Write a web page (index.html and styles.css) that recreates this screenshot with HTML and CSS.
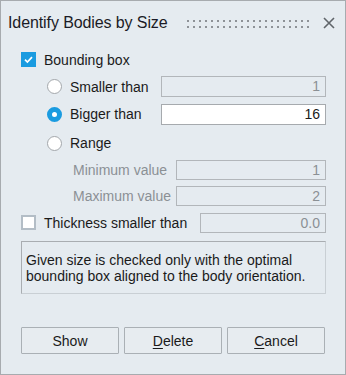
FILE: index.html
```
<!DOCTYPE html>
<html>
<head>
<meta charset="utf-8">
<link rel="stylesheet" href="styles.css">
</head>
<body>
<div class="dialog">
  <div class="titlebar">
    <span class="title">Identify Bodies by Size</span>
    <svg class="grip" width="122" height="9" viewBox="0 0 122 9">
      <defs>
        <pattern id="dots" width="6" height="6" patternUnits="userSpaceOnUse">
          <rect x="0" y="0" width="2" height="2" fill="#8e9297"/>
        </pattern>
      </defs>
      <rect x="0" y="0" width="122" height="9" fill="url(#dots)"/>
    </svg>
    <svg class="close" width="12" height="12" viewBox="0 0 12 12">
      <path d="M1 1L11 11M11 1L1 11" stroke="#60656a" stroke-width="1.6" fill="none"/>
    </svg>
  </div>
  <div class="content">
    <div class="row r1">
      <span class="cb on"><svg width="15" height="15" viewBox="0 0 15 15"><path d="M4 7.6L6.4 10L11 5.2" stroke="#fff" stroke-width="1.7" fill="none"/></svg></span>
      <span class="lbl">Bounding box</span>
    </div>
    <div class="row r2 ind">
      <span class="radio"></span>
      <span class="lbl">Smaller than</span>
      <span class="field dis w165">1</span>
    </div>
    <div class="row r3 ind">
      <span class="radio on"></span>
      <span class="lbl">Bigger than</span>
      <span class="field w165">16</span>
    </div>
    <div class="row r4 ind">
      <span class="radio"></span>
      <span class="lbl">Range</span>
    </div>
    <div class="row r5 ind2">
      <span class="lbl dim">Minimum value</span>
      <span class="field dis w150">1</span>
    </div>
    <div class="row r6 ind2">
      <span class="lbl dim">Maximum value</span>
      <span class="field dis w150">2</span>
    </div>
    <div class="row r7">
      <span class="cb"></span>
      <span class="lbl">Thickness smaller than</span>
      <span class="field dis w126">0.0</span>
    </div>
    <div class="info">Given size is checked only with the optimal bounding box aligned to the body orientation.</div>
  </div>
  <div class="buttons">
    <button class="btn">Show</button>
    <button class="btn"><u>D</u>elete</button>
    <button class="btn"><u>C</u>ancel</button>
  </div>
</div>
</body>
</html>
```
FILE: styles.css
```
html, body {
  margin: 0;
  padding: 0;
  background: #e5ebf0;
}
body {
  font-family: "Liberation Sans", Arial, sans-serif;
  font-size: 14px;
  color: #1a1a1a;
}
.dialog {
  width: 346px;
  height: 375px;
  box-sizing: border-box;
  border: 1px solid #a7abaf;
  background: #e5ebf0;
  display: flex;
  flex-direction: column;
}
.titlebar {
  height: 43px;
  display: flex;
  align-items: center;
  padding: 0 10px 0 7px;
}
.title {
  font-size: 16px;
  color: #1b1b26;
  letter-spacing: -0.1px;
  padding-top: 1px;
}
.grip {
  margin-left: auto;
  margin-right: 14px;
  margin-top: 4px;
}
.close {
  margin-top: 1px;
}
.content {
  padding: 2px 19px 0 20px;
}
.row {
  display: flex;
  align-items: center;
}
.r1 { height: 27px; }
.r2 { height: 27px; }
.r3 { height: 28px; }
.r4 { height: 30px; }
.r5 { height: 24px; }
.r6 { height: 27px; }
.r7 { height: 27px; }
.ind { padding-left: 26px; }
.ind2 { padding-left: 52px; }
.cb {
  width: 15px;
  height: 15px;
  box-sizing: border-box;
  border: 2px solid #b3bdc6;
  background: #fff;
  margin-right: 8px;
  flex: none;
}
.cb.on {
  border: none;
  background: #1a9be0;
}
.cb svg { display: block; }
.radio {
  width: 15px;
  height: 15px;
  box-sizing: border-box;
  border-radius: 50%;
  border: 1px solid #a3a7ab;
  background: #fff;
  margin-right: 8px;
  flex: none;
}
.radio.on {
  border: 5px solid #1a9be0;
}
.lbl { white-space: nowrap; }
.dim { color: #8b9095; }
.field {
  margin-left: auto;
  height: 21px;
  box-sizing: border-box;
  border: 1px solid #a6aaae;
  background: #fff;
  text-align: right;
  padding-right: 5px;
  line-height: 19px;
  color: #1a1a1a;
}
.field.dis {
  background: #e5ebf0;
  border-color: #b2b6ba;
  color: #8b9095;
}
.w165 { width: 165px; }
.w150 { width: 150px; height: 20px; line-height: 18px; }
.w126 { width: 126px; height: 20px; line-height: 18px; }
.info {
  margin-top: 5px;
  height: 53px;
  box-sizing: border-box;
  border: 1px solid #a9adb1;
  border-right-color: #c9cfd4;
  border-bottom-color: #c9cfd4;
  padding: 10px 4px 0 4px;
  line-height: 16px;
  font-size: 14px;
  color: #1a1a1a;
}
.buttons {
  margin-top: auto;
  display: flex;
  gap: 5px;
  padding: 0 19px 20px 20px;
}
.btn {
  width: 98px;
  height: 27px;
  box-sizing: border-box;
  border: 1px solid #aab0b5;
  border-radius: 1px;
  background: #e7ecf0;
  font-family: "Liberation Sans", Arial, sans-serif;
  font-size: 14px;
  color: #1a1a1a;
  padding: 0;
}
.btn u { text-underline-offset: 2px; }
```
